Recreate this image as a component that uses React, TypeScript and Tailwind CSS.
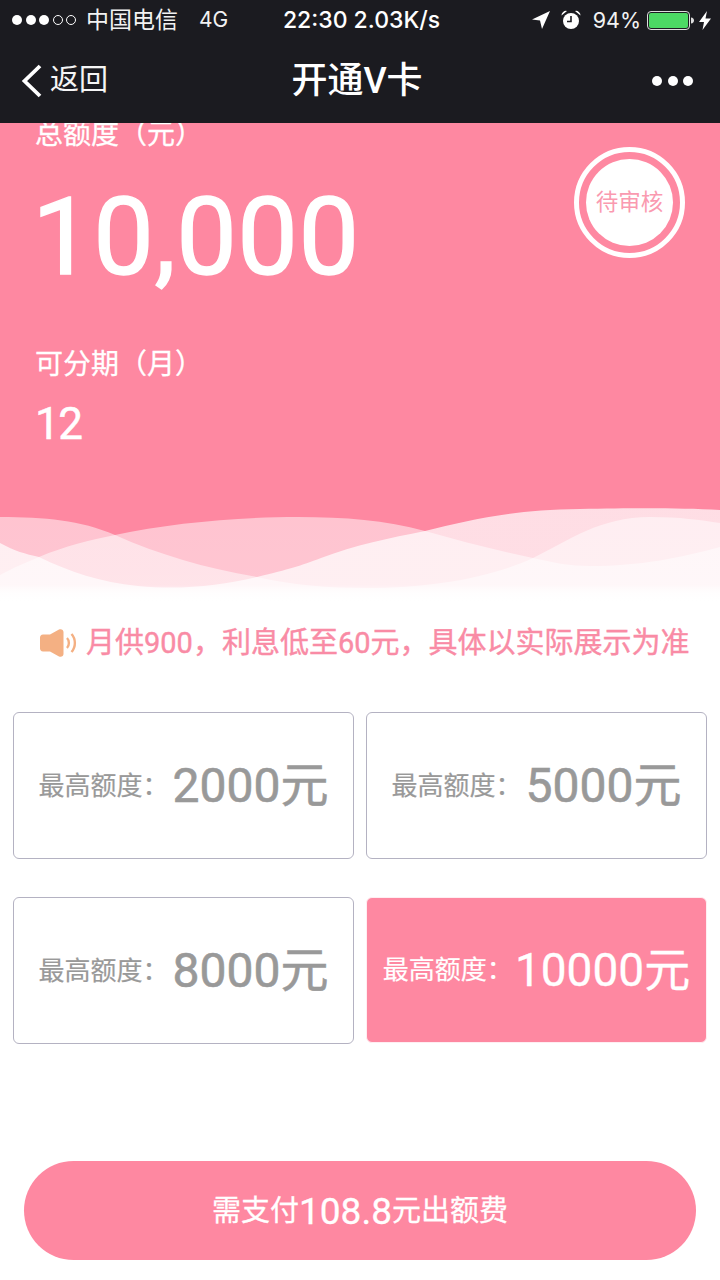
const FONT = "font-['Roboto','Noto_Sans_CJK_SC',sans-serif]";

function Card({ value, active }: { value: string; active?: boolean }) {
  return (
    <div
      className={
        active
          ? "flex h-[146px] items-center justify-center gap-[2px] rounded-[6px] border border-[#ffeef2] bg-[#fe88a1] text-white"
          : "flex h-[147px] items-center justify-center gap-[4px] rounded-[6px] border border-[#b4b2c2] bg-white text-[#999999]"
      }
    >
      <span className="text-[26px] leading-[40px] [-webkit-text-stroke:0.2px]">最高额度：</span>
      <span className={active ? "text-[46px] leading-[60px] [-webkit-text-stroke:0.3px]" : "text-[48px] leading-[60px] [-webkit-text-stroke:0.6px]"}>{value}元</span>
    </div>
  );
}

export default function App() {
  return (
    <div className={`${FONT} flex min-h-[1280px] w-[720px] flex-col overflow-hidden bg-white`}>
      <header className="h-[123px] bg-[#1b1b20] text-white">
        <div className="flex h-[40px] items-center font-['Inter','Noto_Sans_CJK_SC',sans-serif] text-[22px]">
          <div className="flex flex-1 items-center pl-[12px]">
            <div className="flex items-center gap-[3.5px]">
              <i className="h-[10px] w-[10px] rounded-full bg-white" />
              <i className="h-[10px] w-[10px] rounded-full bg-white" />
              <i className="h-[10px] w-[10px] rounded-full bg-white" />
              <i className="h-[10px] w-[10px] rounded-full border border-white" />
              <i className="h-[10px] w-[10px] rounded-full border border-white" />
            </div>
            <span className="ml-[10px] text-[23px] text-[#f2f2f2]">中国电信</span>
            <span className="ml-[21px] text-[21px] text-[#f2f2f2]">4G</span>
          </div>
          <div className="text-[23px] font-medium">22:30 2.03K/s</div>
          <div className="flex flex-1 items-center justify-end pr-[9px]">
            <svg width="18" height="18" viewBox="0 0 18 18" className="mr-[11px]">
              <path d="M18 0 L0 8.5 L8 9.5 L10 18 Z" fill="#fff" />
            </svg>
            <svg width="20" height="20" viewBox="0 0 20 20" className="mr-[12px]">
              <circle cx="10" cy="11" r="8" fill="#fff" />
              <path d="M10 6 V11.5 H6" stroke="#1b1b20" strokeWidth="1.6" fill="none" />
              <path d="M0.5 5.5 A4.5 4.5 0 0 1 6 1 Z M19.5 5.5 A4.5 4.5 0 0 0 14 1 Z" fill="#fff" />
            </svg>
            <span className="mr-[6px] text-[21.5px] text-[#f2f2f2]">94%</span>
            <svg width="47" height="19" viewBox="0 0 47 19" className="mr-[5px]">
              <rect x="0.5" y="0.5" width="42" height="18" rx="3.5" fill="none" stroke="#ddd" strokeWidth="1" />
              <rect x="2" y="2" width="39" height="15" rx="2" fill="#4cd964" />
              <path d="M44 6.5 C46 6.5 47 8 47 9.5 C47 11 46 12.5 44 12.5 Z" fill="#ddd" />
            </svg>
            <svg width="12" height="19" viewBox="0 0 12 19">
              <path d="M8 0 L0 11 L5 11 L3.5 19 L12 7.5 L6.5 7.5 Z" fill="#fff" />
            </svg>
          </div>
        </div>
        <div className="flex h-[83px] items-center justify-between pb-[1px] pl-[21px] pr-[27px]">
          <div className="flex w-[150px] items-center">
            <svg width="22" height="34" viewBox="0 0 22 34">
              <path d="M19 2 L3.5 17 L19 32" fill="none" stroke="#fff" strokeWidth="3.8" />
            </svg>
            <span className="ml-[7px] text-[29px] text-[#f5f5f5]">返回</span>
          </div>
          <div className="text-[36px] font-medium leading-[44px]">开通V卡</div>
          <div className="flex w-[150px] justify-end gap-[5.5px]">
            <i className="h-[10px] w-[10px] rounded-full bg-white" />
            <i className="h-[10px] w-[10px] rounded-full bg-white" />
            <i className="h-[10px] w-[10px] rounded-full bg-white" />
          </div>
        </div>
      </header>

      <section className="h-[482px] overflow-hidden bg-[#fe88a1] text-white">
        <div className="flex items-start justify-between pl-[36px] pr-[35px]">
          <div>
            <div className="-ml-[1px] -mt-[1px] text-[28px] leading-[26px] [-webkit-text-stroke:0.3px]">总额度（元）</div>
            <div className="-ml-[4px] mt-[36px] text-[108px] leading-[106px] tracking-[0.5px] [-webkit-text-stroke:1.4px]">10,000</div>
            <div className="-ml-[1px] mt-[62px] text-[28px] leading-[26px] [-webkit-text-stroke:0.3px]">可分期（月）</div>
            <div className="-ml-[1px] mt-[22px] text-[44px] leading-[48px] tracking-[-1.5px] [-webkit-text-stroke:0.5px]">12</div>
          </div>
          <div className="mt-[24px] flex h-[111px] w-[111px] items-center justify-center rounded-full border-[5px] border-white">
            <div className="flex h-[87px] w-[87px] items-center justify-center rounded-full bg-white text-[22.5px] text-[#fa9ab0]">
              待审核
            </div>
          </div>
        </div>
        <svg width="720" height="100" viewBox="0 505 720 100" className="mt-[57px] block">
          <defs>
            <linearGradient id="fade" gradientUnits="userSpaceOnUse" x1="0" y1="505" x2="0" y2="605">
              <stop offset="0" stopColor="#fff" stopOpacity="0.5" />
              <stop offset="0.8" stopColor="#fff" stopOpacity="0.52" />
              <stop offset="1" stopColor="#fff" stopOpacity="1" />
            </linearGradient>
            <linearGradient id="fade2" gradientUnits="userSpaceOnUse" x1="0" y1="505" x2="0" y2="605">
              <stop offset="0" stopColor="#fff" stopOpacity="0.72" />
              <stop offset="0.8" stopColor="#fff" stopOpacity="0.72" />
              <stop offset="1" stopColor="#fff" stopOpacity="1" />
            </linearGradient>
          </defs>
          <path
            d="M0 517 C45 517 80 520 115 535 C160 555 205 568 257 577 C290 585 330 588 367 588 C430 588 490 578 533 558 C570 540 600 517 650 517 C680 517 700 520 720 523 V605 H0 Z"
            fill="url(#fade)"
          />
          <path
            d="M0 575 C15 567 25 563 39 557 C65 546 90 540 115 535 C170 523 240 517 298 517 C345 517 385 520 425 531 C460 541 495 550 533 558 C555 563 570 566 590 566 C640 566 680 558 720 547 V605 H0 Z"
            fill="url(#fade)"
          />
          <path
            d="M0 543 C15 551 25 554 39 557 C70 572 100 582 138 586 C180 590 220 586 257 577 C290 569 300 566 321 558 C355 545 390 538 425 531 C470 520 510 510 580 509 C640 508 680 508 720 510 V605 H0 Z"
            fill="url(#fade2)"
          />
        </svg>
      </section>

      <div className="mt-[18px] flex h-[40px] items-center pl-[40px]">
        <svg width="37" height="28" viewBox="0 0 37 28" className="mr-[9px]">
          <path
            d="M3 5.5 H10 L19 0.5 C21.5 -0.5 23.5 1 23.5 3 V25 C23.5 27 21.5 28.5 19 27.5 L10 22.5 H3 C1 22.5 0 21 0 19.5 V8.5 C0 7 1 5.5 3 5.5 Z"
            fill="#f4b083"
          />
          <path d="M27 9 C29.5 11.5 29.5 16.5 27 19" fill="none" stroke="#f4b083" strokeWidth="2.4" />
          <path d="M31.5 5 C36 10 36 18 31.5 23" fill="none" stroke="#f4b083" strokeWidth="2.4" />
        </svg>
        <span className="whitespace-nowrap text-[29px] leading-[40px] text-[#f98ba5] [-webkit-text-stroke:0.4px]">
          月供900，利息低至60元，具体以实际展示为准
        </span>
      </div>

      <div className="mt-[49px] grid grid-cols-2 gap-x-[12px] gap-y-[38px] px-[13px]">
        <Card value="2000" />
        <Card value="5000" />
        <Card value="8000" />
        <Card value="10000" active />
      </div>

      <button className="mx-[24px] mt-[117px] flex h-[99px] items-center justify-center rounded-full bg-[#fe88a1] pt-[3px] text-[29px] text-white [-webkit-text-stroke:0.3px]">
        需支付<span className="text-[37px]">108.8</span>元出额费
      </button>
    </div>
  );
}
